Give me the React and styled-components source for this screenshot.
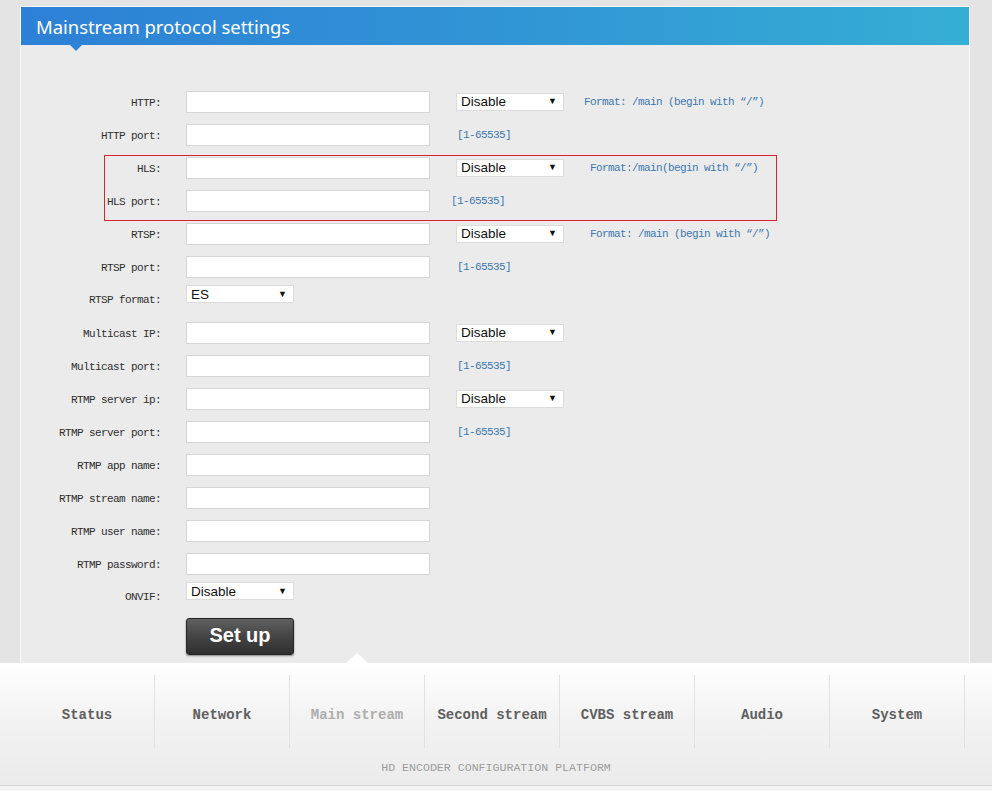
import React from "react";
import styled, { createGlobalStyle } from "styled-components";

const GlobalStyle = createGlobalStyle`
  * { box-sizing: border-box; }
  html, body { margin: 0; padding: 0; }
  body {
    background: #e4e4e4;
    font-family: "Liberation Sans", Arial, sans-serif;
  }
`;

const Page = styled.div`
  width: 992px;
  padding-top: 6px;
`;

const Panel = styled.section`
  margin-left: 20px;
  width: 950px;
  background: #ebebeb;
  border: 1px solid #f8f8f8;
  border-bottom: none;
`;

const Header = styled.header`
  position: relative;
  height: 38px;
  padding-left: 15px;
  display: flex;
  align-items: center;
  background: linear-gradient(to right, #2d80d6 0%, #3197d5 55%, #35aed4 100%);
  &::after {
    content: "";
    position: absolute;
    left: 49px;
    bottom: -6px;
    border-left: 6px solid transparent;
    border-right: 6px solid transparent;
    border-top: 6px solid #2f84d5;
  }
`;

const Title = styled.h1`
  margin: 0;
  color: #ffffff;
  font-family: "Noto Sans", "Open Sans", sans-serif;
  font-size: 18.5px;
  font-weight: 400;
  letter-spacing: -0.05px;
`;

const Body = styled.div`
  padding: 40px 0 8px 0;
`;

const Row = styled.div`
  display: flex;
  align-items: center;
  height: 33px;
`;

const Label = styled.label`
  width: 165px;
  padding-right: 25px;
  text-align: right;
  font-family: "Liberation Mono", "DejaVu Sans Mono", monospace;
  font-size: 11px;
  letter-spacing: -0.6px;
  color: #2e2e2e;
  padding-top: 2px;
  align-self: ${(p) => (p.$low ? "flex-end" : "auto")};
  padding-bottom: ${(p) => (p.$low ? "10px" : "0")};
`;

const TextInput = styled.input`
  width: 244px;
  height: 22px;
  margin: 0;
  padding: 2px 4px;
  background: #fff;
  border: 1px solid #d6d6d6;
  outline: none;
  font-family: "Liberation Sans", Arial, sans-serif;
  font-size: 13px;
`;

const SelectBox = styled.div`
  display: flex;
  align-items: center;
  justify-content: space-between;
  width: 108px;
  height: 18px;
  margin-left: ${(p) => p.$offset || 0}px;
  align-self: ${(p) => (p.$top ? "flex-start" : "auto")};
  margin-top: ${(p) => (p.$top ? "2px" : "0")};
  padding: 0 6px 0 4px;
  background: #fff;
  border: 1px solid #dcdcdc;
  font-family: "Liberation Sans", Arial, sans-serif;
  font-size: 13.5px;
  color: #111;
`;

const Arrow = styled.span`
  font-size: 9px;
  color: #111;
  line-height: 1;
`;

const Hint = styled.span`
  margin-left: ${(p) => p.$offset || 0}px;
  font-family: "Liberation Mono", "DejaVu Sans Mono", monospace;
  font-size: 11px;
  letter-spacing: -0.6px;
  color: #3b78b0;
  white-space: pre;
`;

const HighlightGroup = styled.div`
  position: relative;
`;

const HighlightFrame = styled.div`
  position: absolute;
  left: 83px;
  top: 4px;
  width: 673px;
  height: 66px;
  border: 1px solid #d3262e;
  pointer-events: none;
`;

const ButtonRow = styled.div`
  padding-left: 165px;
  margin-top: 5px;
`;

const SubmitButton = styled.button`
  width: 108px;
  height: 37px;
  margin: 0;
  padding: 0 0 2px 0;
  border: 1px solid #262626;
  border-radius: 3px;
  background: linear-gradient(to bottom, #606060 0%, #444 50%, #2f2f2f 100%);
  box-shadow: 0 1px 2px rgba(0, 0, 0, 0.45);
  color: #fff;
  font-family: "Liberation Sans", Arial, sans-serif;
  font-weight: 700;
  font-size: 20px;
  cursor: pointer;
`;

const Nav = styled.nav`
  width: 992px;
  height: 128px;
  background: linear-gradient(to bottom, #ffffff 0%, #f3f3f3 45%, #ebebeb 100%);
  border-bottom: 5px solid #f4f4f4;
  box-shadow: inset 0 -1px 0 #d8d8d8;
  padding-top: 12px;
  display: flex;
  flex-direction: column;
`;

const Tabs = styled.ul`
  display: flex;
  margin: 0 0 0 20px;
  padding: 0;
  list-style: none;
  height: 73px;
`;

const Tab = styled.li`
  position: relative;
  width: 135px;
  display: flex;
  align-items: center;
  justify-content: center;
  border-right: 1px solid #e2e2e2;
  font-family: "Liberation Mono", "DejaVu Sans Mono", monospace;
  font-weight: 700;
  font-size: 14px;
  color: ${(p) => (p.$active ? "#adadad" : "#606060")};
  padding-top: 7px;
  &::before {
    content: "";
    display: ${(p) => (p.$active ? "block" : "none")};
    position: absolute;
    top: -22px;
    left: 50%;
    margin-left: -11px;
    border-left: 11px solid transparent;
    border-right: 11px solid transparent;
    border-bottom: 10px solid #ffffff;
  }
`;

const Footer = styled.div`
  margin-top: 13px;
  text-align: center;
  font-family: "Liberation Mono", "DejaVu Sans Mono", monospace;
  font-size: 11.6px;
  color: #9c9c9c;
`;

const Select = ({ value, offset, top }) => (
  <SelectBox $offset={offset} $top={top}>
    <span>{value}</span>
    <Arrow>▼</Arrow>
  </SelectBox>
);

const tabs = ["Status", "Network", "Main stream", "Second stream", "CVBS stream", "Audio", "System"];

const rtmpFields = ["RTMP app name:", "RTMP stream name:", "RTMP user name:", "RTMP password:"];

export default function App() {
  return (
    <>
      <GlobalStyle />
      <Page>
        <Panel>
          <Header>
            <Title>Mainstream protocol settings</Title>
          </Header>
          <Body>
            <Row>
              <Label>HTTP:</Label>
              <TextInput />
              <Select value="Disable" offset={26} />
              <Hint $offset={20}>Format: /main (begin with “/”)</Hint>
            </Row>
            <Row>
              <Label>HTTP port:</Label>
              <TextInput />
              <Hint $offset={27}>[1-65535]</Hint>
            </Row>
            <HighlightGroup>
              <Row>
                <Label>HLS:</Label>
                <TextInput />
                <Select value="Disable" offset={26} />
                <Hint $offset={26}>Format:/main(begin with “/”)</Hint>
              </Row>
              <Row>
                <Label>HLS port:</Label>
                <TextInput />
                <Hint $offset={21}>[1-65535]</Hint>
              </Row>
              <HighlightFrame />
            </HighlightGroup>
            <Row>
              <Label>RTSP:</Label>
              <TextInput />
              <Select value="Disable" offset={26} />
              <Hint $offset={26}>Format: /main (begin with “/”)</Hint>
            </Row>
            <Row>
              <Label>RTSP port:</Label>
              <TextInput />
              <Hint $offset={27}>[1-65535]</Hint>
            </Row>
            <Row>
              <Label $low>RTSP format:</Label>
              <Select value="ES" top />
            </Row>
            <Row>
              <Label>Multicast IP:</Label>
              <TextInput />
              <Select value="Disable" offset={26} />
            </Row>
            <Row>
              <Label>Multicast port:</Label>
              <TextInput />
              <Hint $offset={27}>[1-65535]</Hint>
            </Row>
            <Row>
              <Label>RTMP server ip:</Label>
              <TextInput />
              <Select value="Disable" offset={26} />
            </Row>
            <Row>
              <Label>RTMP server port:</Label>
              <TextInput />
              <Hint $offset={27}>[1-65535]</Hint>
            </Row>
            {rtmpFields.map((f) => (
              <Row key={f}>
                <Label>{f}</Label>
                <TextInput type={f.includes("password") ? "password" : "text"} />
              </Row>
            ))}
            <Row>
              <Label $low>ONVIF:</Label>
              <Select value="Disable" top />
            </Row>
            <ButtonRow>
              <SubmitButton>Set up</SubmitButton>
            </ButtonRow>
          </Body>
        </Panel>
        <Nav>
          <Tabs>
            {tabs.map((t) => (
              <Tab key={t} $active={t === "Main stream"}>
                {t}
              </Tab>
            ))}
          </Tabs>
          <Footer>HD ENCODER CONFIGURATION PLATFORM</Footer>
        </Nav>
      </Page>
    </>
  );
}
